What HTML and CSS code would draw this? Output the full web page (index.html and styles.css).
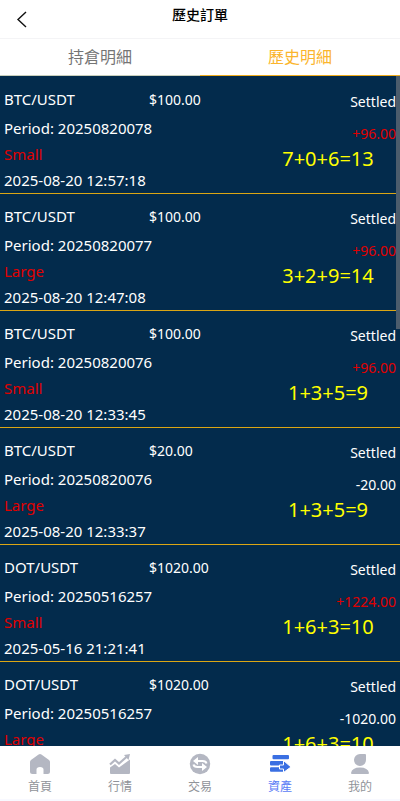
FILE: index.html
```html
<!DOCTYPE html>
<html lang="zh-Hant">
<head>
<meta charset="utf-8">
<meta name="viewport" content="width=device-width, initial-scale=1">
<title>歷史訂單</title>
<link rel="stylesheet" href="styles.css">
</head>
<body>
<header class="topbar">
  <button class="back" type="button" aria-label="返回"><svg width="12" height="18" viewBox="0 0 12 18" fill="none" stroke="#111" stroke-width="1.4"><path d="M10 2L2 9.500L10 17"/></svg></button>
  <h1 class="title">歷史訂單</h1>
</header>
<nav class="tabs">
  <button class="tab" type="button">持倉明細</button>
  <button class="tab tab-active" type="button">歷史明細</button>
</nav>
<main class="viewport">
  <div class="orders">
    <article class="order">
      <div class="info"><div class="pair"><span>BTC/USDT</span><span class="amount">$100.00</span></div><div class="period">Period: 20250820078</div><div class="side">Small</div><div class="time">2025-08-20 12:57:18</div></div>
      <div class="outcome"><div class="status">Settled</div><div class="profit gain">+96.00</div><div class="draw">7+0+6=13</div></div>
    </article>
    <article class="order">
      <div class="info"><div class="pair"><span>BTC/USDT</span><span class="amount">$100.00</span></div><div class="period">Period: 20250820077</div><div class="side">Large</div><div class="time">2025-08-20 12:47:08</div></div>
      <div class="outcome"><div class="status">Settled</div><div class="profit gain">+96.00</div><div class="draw">3+2+9=14</div></div>
    </article>
    <article class="order">
      <div class="info"><div class="pair"><span>BTC/USDT</span><span class="amount">$100.00</span></div><div class="period">Period: 20250820076</div><div class="side">Small</div><div class="time">2025-08-20 12:33:45</div></div>
      <div class="outcome"><div class="status">Settled</div><div class="profit gain">+96.00</div><div class="draw">1+3+5=9</div></div>
    </article>
    <article class="order">
      <div class="info"><div class="pair"><span>BTC/USDT</span><span class="amount">$20.00</span></div><div class="period">Period: 20250820076</div><div class="side">Large</div><div class="time">2025-08-20 12:33:37</div></div>
      <div class="outcome"><div class="status">Settled</div><div class="profit">-20.00</div><div class="draw">1+3+5=9</div></div>
    </article>
    <article class="order">
      <div class="info"><div class="pair"><span>DOT/USDT</span><span class="amount">$1020.00</span></div><div class="period">Period: 20250516257</div><div class="side">Small</div><div class="time">2025-05-16 21:21:41</div></div>
      <div class="outcome"><div class="status">Settled</div><div class="profit gain">+1224.00</div><div class="draw">1+6+3=10</div></div>
    </article>
    <article class="order">
      <div class="info"><div class="pair"><span>DOT/USDT</span><span class="amount">$1020.00</span></div><div class="period">Period: 20250516257</div><div class="side">Large</div></div>
      <div class="outcome"><div class="status">Settled</div><div class="profit">-1020.00</div><div class="draw">1+6+3=10</div></div>
    </article>
  </div>
  <div class="thumb"></div>
</main>
<nav class="navbar">
  <a class="item" href="#"><svg class="icon" viewBox="0 0 22 22"><path fill="currentColor" d="M9.600 1.500Q11 .4 12.400 1.500L20 7Q21 7.800 21 9V18.500Q21 21 18.500 21H14.500V16.500Q14.500 14 11 14T7.500 16.500V21H3.500Q1 21 1 18.500V9Q1 7.800 2 7Z"/></svg><span>首頁</span></a>
  <a class="item" href="#"><svg class="icon" viewBox="0 0 22 22"><path fill="currentColor" d="M1 14.500L6 11L10 14.500L21 6.500V20Q21 21 20 21H2Q1 21 1 20Z"/><path fill="none" stroke="currentColor" stroke-width="2.200" d="M1 11.500L6 7L10 10.500L18 3.500"/><path fill="currentColor" d="M15 2L21 1L19.500 7Z"/></svg><span>行情</span></a>
  <a class="item" href="#"><svg class="icon" viewBox="0 0 22 22"><circle cx="11" cy="11" r="10.200" fill="currentColor"/><path fill="none" stroke="#fff" stroke-width="2" d="M7 8H13.500Q17 8 17.500 10.500M15 14H8.500Q5 14 4.500 11.500"/><path fill="#fff" d="M4 8L9 4V12ZM18 14L13 10V18Z"/></svg><span>交易</span></a>
  <a class="item item-active" href="#"><svg class="icon" viewBox="0 0 22 22"><g fill="currentColor"><rect x="3.500" y="2" width="16.500" height="4.200" rx="1"/><rect x="1" y="8" width="14" height="4.600" rx="1"/><rect x="1" y="14.200" width="14.500" height="4.600" rx="1"/></g><path fill="currentColor" stroke="#fff" stroke-width="1" d="M10.500 12H14.500V7.500L22 14L14.500 19.500V16H10.500Z"/></svg><span>資產</span></a>
  <a class="item" href="#"><svg class="icon" viewBox="0 0 22 22"><path fill="currentColor" d="M11 1H16Q17 1 17 2V7A6 6 0 0 1 5 7A6 6 0 0 1 11 1ZM2 20Q3 14.500 11 14.500T20 20Q20 21 19 21H3Q2 21 2 20Z"/></svg><span>我的</span></a>
</nav>
</body>
</html>
```
FILE: styles.css
```css
* { box-sizing: border-box; }
body {
  margin: 0;
  height: 100vh;
  display: flex;
  flex-direction: column;
  background: #fff;
  font-family: "Noto Sans", "Noto Sans CJK TC", sans-serif;
  font-size: 15px;
}
button { border: 0; background: none; padding: 0; font: inherit; }
.topbar {
  display: grid;
  grid-template-columns: 44px 1fr 44px;
  height: 39px;
  flex: none;
  border-bottom: 1px solid #f4f4f6;
}
.back { display: flex; align-items: center; justify-content: center; }
.title { margin: 0; font-size: 14px; line-height: 30px; font-weight: 500; text-align: center; color: #000; }
.tabs { display: flex; flex: none; height: 37px; }
.tab { flex: 1; font-size: 16px; line-height: 36px; color: #757575; border-bottom: 1px solid #c8cfbc; }
.tab-active { color: #fbb52d; border-color: #f0ac1c; }
.viewport { position: relative; flex: 1; min-height: 0; background: #032b4c; }
.orders { height: 100%; padding-top: 1px; overflow-y: auto; scrollbar-width: none; }
.thumb { position: absolute; top: 0; right: 0; width: 4px; height: 60%; max-height: 253px; background: #4b5c6c; }
.order {
  display: grid;
  grid-template-columns: 1fr 1fr;
  padding: 10px 4px 0;
  border-bottom: 1px solid #dba614;
  color: #fff;
}
.pair { display: grid; grid-template-columns: 74% 26%; align-items: baseline; height: 24px; line-height: 24px; margin-bottom: 4px; }
.amount { font-size: 14px; }
.period { line-height: 26px; }
.side { line-height: 26px; color: #e00000; }
.time { line-height: 26px; }
.outcome { display: flex; flex-direction: column; }
.status { font-size: 14px; line-height: 30px; text-align: right; }
.profit { font-size: 14px; line-height: 34px; text-align: right; }
.gain { color: #e00000; }
.draw { align-self: flex-end; width: 136px; line-height: 16px; font-size: 20px; text-align: center; color: #ff0; }
.navbar { display: flex; flex: none; height: 55px; background: #fff; border-bottom: 2px solid #f8f9ff; }
.item { flex: 1; display: flex; flex-direction: column; align-items: center; padding-top: 7px; color: #b4b7c2; font-size: 12px; line-height: 24px; text-decoration: none; }
.item span { color: #909399; }
.icon { width: 22px; height: 22px; flex: none; }
.item-active { color: #3a6fe2; }
.item-active span { color: #5b7cf5; }
```
